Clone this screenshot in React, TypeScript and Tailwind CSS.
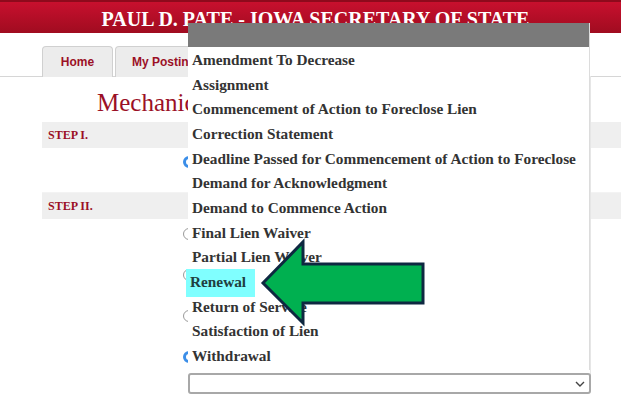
import React from 'react';

const options = [
  'Amendment To Decrease',
  'Assignment',
  'Commencement of Action to Foreclose Lien',
  'Correction Statement',
  'Deadline Passed for Commencement of Action to Foreclose',
  'Demand for Acknowledgment',
  'Demand to Commence Action',
  'Final Lien Waiver',
  'Partial Lien Waiver',
  'Renewal',
  'Return of Service',
  'Satisfaction of Lien',
  'Withdrawal',
];

const serif = { fontFamily: '"Liberation Serif", "DejaVu Serif", serif' };

const Radio = ({ checked }: { checked?: boolean }) => (
  <span
    className={
      checked
        ? 'block w-[12px] h-[12px] rounded-full border-[3px] border-[#3b8ee8] bg-white'
        : 'block w-[12px] h-[12px] rounded-full border border-[#9a9a9a] bg-white'
    }
  />
);

export default function App() {
  return (
    <div className="relative w-[621px] h-[399px] overflow-hidden bg-white" style={serif}>
      {/* header */}
      <div className="h-[33px] border-t-2 border-[#8e0a1c] bg-gradient-to-b from-[#c8102e] to-[#a00c20] flex items-center justify-center">
        <h1 className="text-[20px] font-bold text-white pl-[10px] pt-[2px]">
          PAUL D. PATE - IOWA SECRETARY OF STATE
        </h1>
      </div>

      {/* tabs */}
      <div className="mt-[13px] flex pl-[42px] border-b border-[#d6d6d6] h-[31px]">
        <div
          className="w-[71px] h-[31px] bg-[#ececec] border border-b-0 border-[#d0d0d0] rounded-t-[4px] flex items-center justify-center text-[12px] font-bold text-[#9b1026]"
          style={{ fontFamily: '"Liberation Sans", Arial, sans-serif' }}
        >
          Home
        </div>
        <div
          className="ml-[2px] w-[120px] h-[31px] bg-[#ececec] border border-b-0 border-[#d0d0d0] rounded-t-[4px] flex items-center pl-[16px] text-[12px] font-bold text-[#9b1026]"
          style={{ fontFamily: '"Liberation Sans", Arial, sans-serif' }}
        >
          My Postings
        </div>
      </div>

      {/* main content */}
      <div className="pl-[42px]">
        <h2 className="pl-[55px] pt-[12px] h-[45px] text-[25px] text-[#9b1026] leading-[28px] whitespace-nowrap">
          Mechanic's Lien Filing
        </h2>
        <div className="h-[26px] bg-[#efefef] flex items-center pl-[6px] text-[12px] font-bold text-[#9b1026]">
          STEP I.
        </div>
        <div className="h-[45px] pl-[141px] pt-[8px] border-b border-[#f3f3f3]">
          <Radio checked />
        </div>
        <div className="h-[26px] bg-[#efefef] flex items-center pl-[6px] text-[12px] font-bold text-[#9b1026]">
          STEP II.
        </div>
        <div className="flex flex-col gap-[29px] pl-[141px] pt-[9px]">
          <Radio />
          <Radio />
          <Radio />
          <Radio checked />
        </div>
      </div>

      {/* right column rule */}
      <div className="absolute left-[590px] top-[76px] w-px h-[300px] bg-[#e6e6e6]" />

      {/* open dropdown list */}
      <div className="absolute left-[188px] top-[23px] w-[402px] bg-white border-r border-[#dcdcdc]">
        <div className="h-[24px] bg-[#7a7a7a]" />
        <ul className="pt-[1px] pb-[1px]">
          {options.map((o) => (
            <li
              key={o}
              className="h-[24.7px] flex items-center text-[15.3px] font-bold text-[#333] whitespace-nowrap"
            >
              <span
                className={
                  o === 'Renewal'
                    ? 'bg-[#80ffff] h-[28px] flex items-center pl-[4px] pr-[9px] -ml-[2px] text-[#1f4040]'
                    : 'pl-[4px]'
                }
              >
                {o}
              </span>
            </li>
          ))}
        </ul>
      </div>

      {/* closed select */}
      <div className="absolute left-[188px] top-[373px] w-[403px] h-[21px] border-2 border-[#a8a8a8] rounded-[3px] bg-white flex items-center justify-end pr-[4px]">
        <svg width="10" height="6" viewBox="0 0 10 6" fill="none" stroke="#444" strokeWidth="1.4">
          <path d="M1 1l4 4 4-4" />
        </svg>
      </div>

      {/* callout arrow */}
      <svg className="absolute left-0 top-0" width="621" height="399" viewBox="0 0 621 399">
        <polygon
          points="263,283 303,242 303,264 423,264 423,303 303,303 303,323"
          fill="#00b050"
          stroke="#0e2841"
          strokeWidth="3"
          strokeLinejoin="miter"
        />
      </svg>
    </div>
  );
}
